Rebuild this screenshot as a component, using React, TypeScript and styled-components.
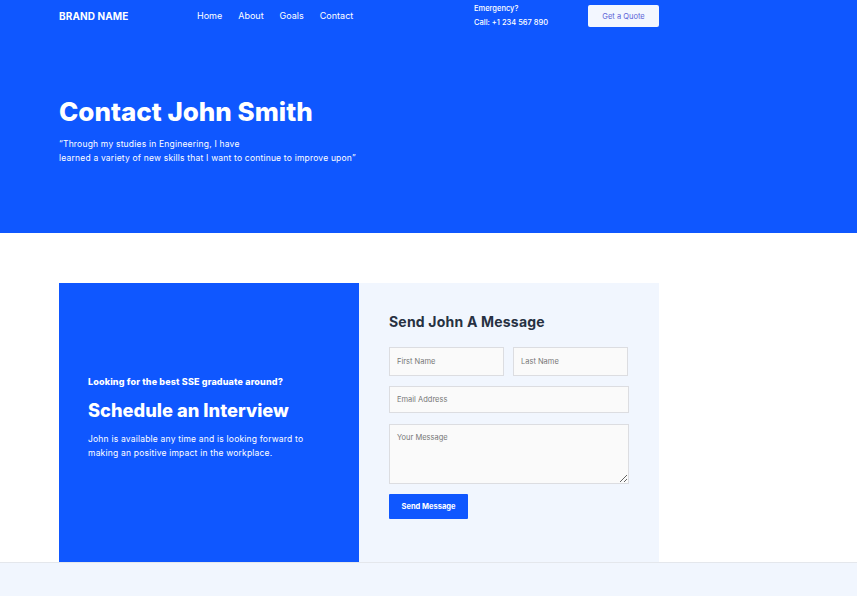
import React from "react";
import styled, { createGlobalStyle } from "styled-components";

const Global = createGlobalStyle`
  html, body { margin: 0; padding: 0; background: #f1f6fe; }
  body { font-family: "Open Sans", "Liberation Sans", sans-serif; }
  * { box-sizing: border-box; }
`;

const BLUE = "#0f57ff";

const Hero = styled.section`
  background: ${BLUE};
  height: 233px;
  padding: 0 0 0 59px;
  color: #fff;
`;

const Header = styled.header`
  display: flex;
  align-items: flex-start;
  width: 600px;
  height: 30px;
`;

const Brand = styled.div`
  font-family: "Inter", sans-serif;
  font-weight: 700;
  font-size: 10px;
  letter-spacing: 0.1px;
  padding-top: 10px;
  width: 138px;
`;

const Nav = styled.nav`
  display: flex;
  gap: 16px;
  padding-top: 10px;
  width: 277px;
`;

const NavLink = styled.a`
  font-family: "Inter", sans-serif;
  font-size: 9px;
  color: #fff;
  text-decoration: none;
`;

const Emergency = styled.div`
  font-family: "Inter", sans-serif;
  font-size: 7.5px;
  font-weight: 500;
  line-height: 14px;
  padding-top: 2px;
  width: 114px;
`;

const QuoteButton = styled.button`
  margin-top: 5px;
  width: 71px;
  height: 22px;
  border: none;
  border-radius: 2px;
  background: #f3f7ff;
  color: #5a5fd6;
  font-family: "Inter", sans-serif;
  font-size: 7.5px;
  padding: 0;
`;

const HeroTitle = styled.h1`
  margin: 67px 0 0;
  font-family: "Inter", sans-serif;
  font-weight: 800;
  font-size: 26px;
  line-height: 30px;
  letter-spacing: 0;
`;

const HeroQuote = styled.p`
  margin: 10px 0 0;
  font-family: "Inter", sans-serif;
  font-size: 8.5px;
  line-height: 14px;
  letter-spacing: 0.2px;
`;

const Main = styled.section`
  background: #fff;
  padding: 50px 0 0 59px;
  border-bottom: 1px solid #e4e7ec;
`;

const Card = styled.div`
  display: grid;
  grid-template-columns: 300px 300px;
  height: 279px;
`;

const Promo = styled.div`
  background: ${BLUE};
  color: #fff;
  padding: 0 29px 10px;
  display: flex;
  flex-direction: column;
  justify-content: center;
`;

const PromoKicker = styled.div`
  font-family: "Inter", sans-serif;
  font-weight: 800;
  font-size: 9px;
  letter-spacing: 0.15px;
`;

const PromoTitle = styled.h2`
  margin: 12px 0 0;
  font-family: "Inter", sans-serif;
  font-weight: 800;
  font-size: 18.3px;
  line-height: 22px;
  letter-spacing: 0;
`;

const PromoText = styled.p`
  margin: 11px 0 0;
  font-family: "Inter", sans-serif;
  font-size: 8.5px;
  line-height: 14px;
  letter-spacing: 0.2px;
`;

const FormPanel = styled.form`
  background: #f1f6fe;
  padding: 30px 30px 0;
  display: flex;
  flex-direction: column;
`;

const FormTitle = styled.h3`
  margin: 0 0 16px;
  font-family: "Inter", sans-serif;
  font-weight: 700;
  font-size: 14px;
  line-height: 18px;
  letter-spacing: 0.2px;
  color: #273142;
`;

const Row = styled.div`
  display: grid;
  grid-template-columns: 115px 115px;
  gap: 9px;
  margin-bottom: 10px;
`;

const Field = styled.input<{ $h?: number }>`
  height: ${(p) => p.$h ?? 29}px;
  width: 100%;
  border: 1px solid #dcdde1;
  background: #fafafa;
  padding: 0 7px;
  font-family: "Inter", sans-serif;
  font-size: 7.5px;
  color: #333;
  outline: none;
  &::placeholder { color: #777; }
`;

const Email = styled(Field)`
  margin-bottom: 11px;
`;

const Message = styled.textarea`
  height: 60px;
  width: 100%;
  border: 1px solid #dcdde1;
  background: #fafafa;
  padding: 8px 7px;
  font-family: "Inter", sans-serif;
  font-size: 7.5px;
  resize: vertical;
  outline: none;
  display: block;
  &::placeholder { color: #777; }
`;

const SendButton = styled.button`
  margin-top: 10px;
  width: 79px;
  height: 25px;
  border: none;
  border-radius: 1px;
  background: ${BLUE};
  color: #fff;
  font-family: "Inter", sans-serif;
  font-weight: 700;
  font-size: 7.5px;
  padding: 0;
`;

const Footer = styled.footer`
  background: #f1f6fe;
  height: 40px;
`;

export default function App() {
  return (
    <>
      <Global />
      <Hero>
        <Header>
          <Brand>BRAND NAME</Brand>
          <Nav>
            <NavLink href="#">Home</NavLink>
            <NavLink href="#">About</NavLink>
            <NavLink href="#">Goals</NavLink>
            <NavLink href="#">Contact</NavLink>
          </Nav>
          <Emergency>
            Emergency?
            <br />
            Call: +1 234 567 890
          </Emergency>
          <QuoteButton type="button">Get a Quote</QuoteButton>
        </Header>
        <HeroTitle>Contact John Smith</HeroTitle>
        <HeroQuote>
          “Through my studies in Engineering, I have
          <br />
          learned a variety of new skills that I want to continue to improve upon”
        </HeroQuote>
      </Hero>
      <Main>
        <Card>
          <Promo>
            <PromoKicker>Looking for the best SSE graduate around?</PromoKicker>
            <PromoTitle>Schedule an Interview</PromoTitle>
            <PromoText>
              John is available any time and is looking forward to
              <br />
              making an positive impact in the workplace.
            </PromoText>
          </Promo>
          <FormPanel onSubmit={(e) => e.preventDefault()}>
            <FormTitle>Send John A Message</FormTitle>
            <Row>
              <Field placeholder="First Name" />
              <Field placeholder="Last Name" />
            </Row>
            <Email $h={27} placeholder="Email Address" />
            <Message placeholder="Your Message" />
            <div>
              <SendButton type="submit">Send Message</SendButton>
            </div>
          </FormPanel>
        </Card>
      </Main>
      <Footer />
    </>
  );
}
